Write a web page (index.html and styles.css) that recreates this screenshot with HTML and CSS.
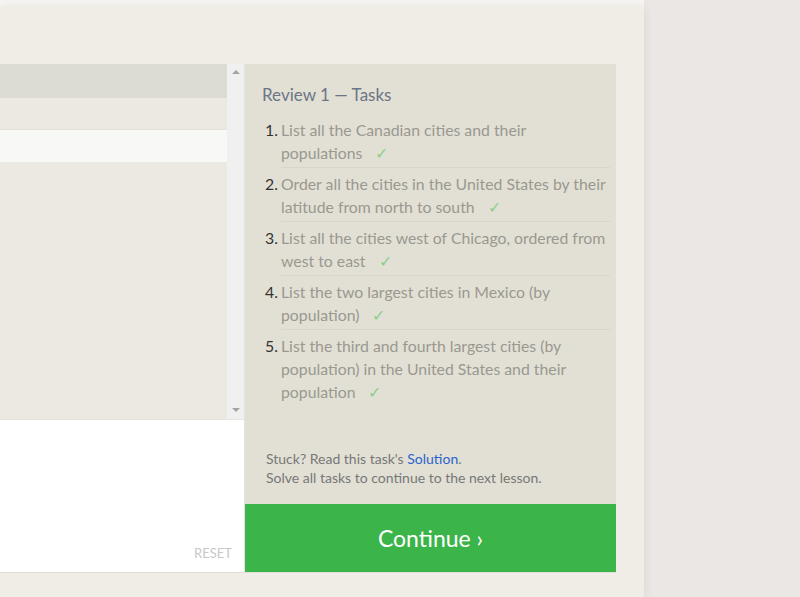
FILE: index.html
```html
<!DOCTYPE html>
<html>
<head>
<meta charset="utf-8">
<link rel="stylesheet" href="styles.css">
</head>
<body>
<div class="page">
  <div class="main">
    <div class="workspace">
      <div class="left">
        <div class="table">
          <div class="grid">
            <div class="row head"></div>
            <div class="row alt"></div>
            <div class="row light"></div>
            <div class="rest"></div>
          </div>
          <div class="scrollbar">
            <span class="arrow up"></span>
            <span class="arrow down"></span>
          </div>
        </div>
        <div class="editor">
          <span class="reset">RESET</span>
        </div>
      </div>
      <div class="right">
        <div class="panel">
          <h2 class="title">Review 1 — Tasks</h2>
          <ol class="tasks">
            <li class="task"><span class="num">1.</span><span class="text">List all the Canadian cities and their populations<span class="check">✓</span></span></li>
            <li class="task"><span class="num">2.</span><span class="text">Order all the cities in the United States by their latitude from north to south<span class="check">✓</span></span></li>
            <li class="task"><span class="num">3.</span><span class="text">List all the cities west of Chicago, ordered from west to east<span class="check">✓</span></span></li>
            <li class="task"><span class="num">4.</span><span class="text">List the two largest cities in Mexico (by population)<span class="check">✓</span></span></li>
            <li class="task"><span class="num">5.</span><span class="text">List the third and fourth largest cities (by population) in the United States and their population<span class="check">✓</span></span></li>
          </ol>
          <div class="help">
            <p>Stuck? Read this task's <a class="link">Solution</a>.</p>
            <p>Solve all tasks to continue to the next lesson.</p>
          </div>
        </div>
        <div class="continue">Continue ›</div>
      </div>
    </div>
  </div>
  <div class="side"></div>
</div>
</body>
</html>
```

FILE: styles.css
```css
html, body {
  margin: 0;
  padding: 0;
  height: 100%;
}
body {
  background: #f6f5f2;
  font-family: Lato, "Open Sans", sans-serif;
  overflow: hidden;
}
.page {
  display: flex;
  height: 597px;
}
.main {
  width: 644px;
  flex: none;
  margin-top: 6px;
  background: #f0ede6;
  border-top-right-radius: 6px;
  padding: 58px 28px 0 0;
  box-sizing: border-box;
  position: relative;
  z-index: 1;
  box-shadow: 2px 0 10px rgba(0, 0, 0, 0.06);
}
.side {
  flex: 1;
  background: #ebe7e4;
}
.workspace {
  display: flex;
  height: 508px;
  border-bottom: 1px solid #e2dfd8;
}
.left {
  width: 244px;
  display: flex;
  flex-direction: column;
}
.table {
  height: 355px;
  display: flex;
}
.grid {
  flex: 1;
  display: flex;
  flex-direction: column;
  background: #ebe9e2;
}
.row {
  height: 32px;
}
.row.head {
  height: 34px;
  background: #dddcd2;
}
.row.alt {
  background: #ebe9e2;
  border-bottom: 1px solid #e3e1da;
  height: 31px;
}
.row.light {
  background: #f8f8f6;
}
.rest {
  flex: 1;
}
.scrollbar {
  width: 17px;
  background: #f0f0f0;
  display: flex;
  flex-direction: column;
  justify-content: space-between;
  align-items: center;
  padding: 6px 0 7px;
  box-sizing: border-box;
}
.arrow {
  width: 0;
  height: 0;
  border-left: 4px solid transparent;
  border-right: 4px solid transparent;
}
.arrow.up {
  border-bottom: 4px solid #a3a3a3;
}
.arrow.down {
  border-top: 4px solid #a3a3a3;
}
.editor {
  flex: 1;
  background: #ffffff;
  border-top: 1px solid #e6e4de;
  display: flex;
  justify-content: flex-end;
  align-items: flex-end;
  padding: 0 12px 11px 0;
}
.reset {
  font-size: 13px;
  color: #c8c8c8;
}
.right {
  width: 372px;
  display: flex;
  flex-direction: column;
}
.panel {
  flex: 1;
  background: #e2e0d5;
  padding: 20px 6px 0 17px;
  display: flex;
  flex-direction: column;
  border-left: 1px solid #e6e4dc;
}
.title {
  margin: 0 0 8px;
  font-size: 17px;
  font-weight: 400;
  color: #6c7585;
  line-height: 22px;
}
.tasks {
  margin: 0;
  padding: 0 0 0 19px;
  list-style: none;
}
.task {
  display: flex;
  font-size: 15.8px;
  line-height: 23px;
  padding: 4px 0 3px;
}
.task + .task {
  border-top: 1px solid #d8d6cb;
}
.num {
  width: 16px;
  flex: none;
  color: #333333;
  margin-left: -16px;
}
.task .text {
  color: #9a9890;
}
.check {
  display: inline-block;
  color: #8ccf8c;
  margin-left: 13px;
  font-size: 16px;
}
.help {
  margin-top: auto;
  padding: 0 0 17px 4px;
  font-size: 14px;
  line-height: 19px;
  color: #777777;
}
.help p {
  margin: 0;
}
.link {
  color: #2a63cf;
}
.continue {
  height: 68px;
  background: #3bb54a;
  color: #ffffff;
  font-size: 23px;
  display: flex;
  align-items: center;
  justify-content: center;
  border-left: 1px solid #e6e4dc;
}
```
